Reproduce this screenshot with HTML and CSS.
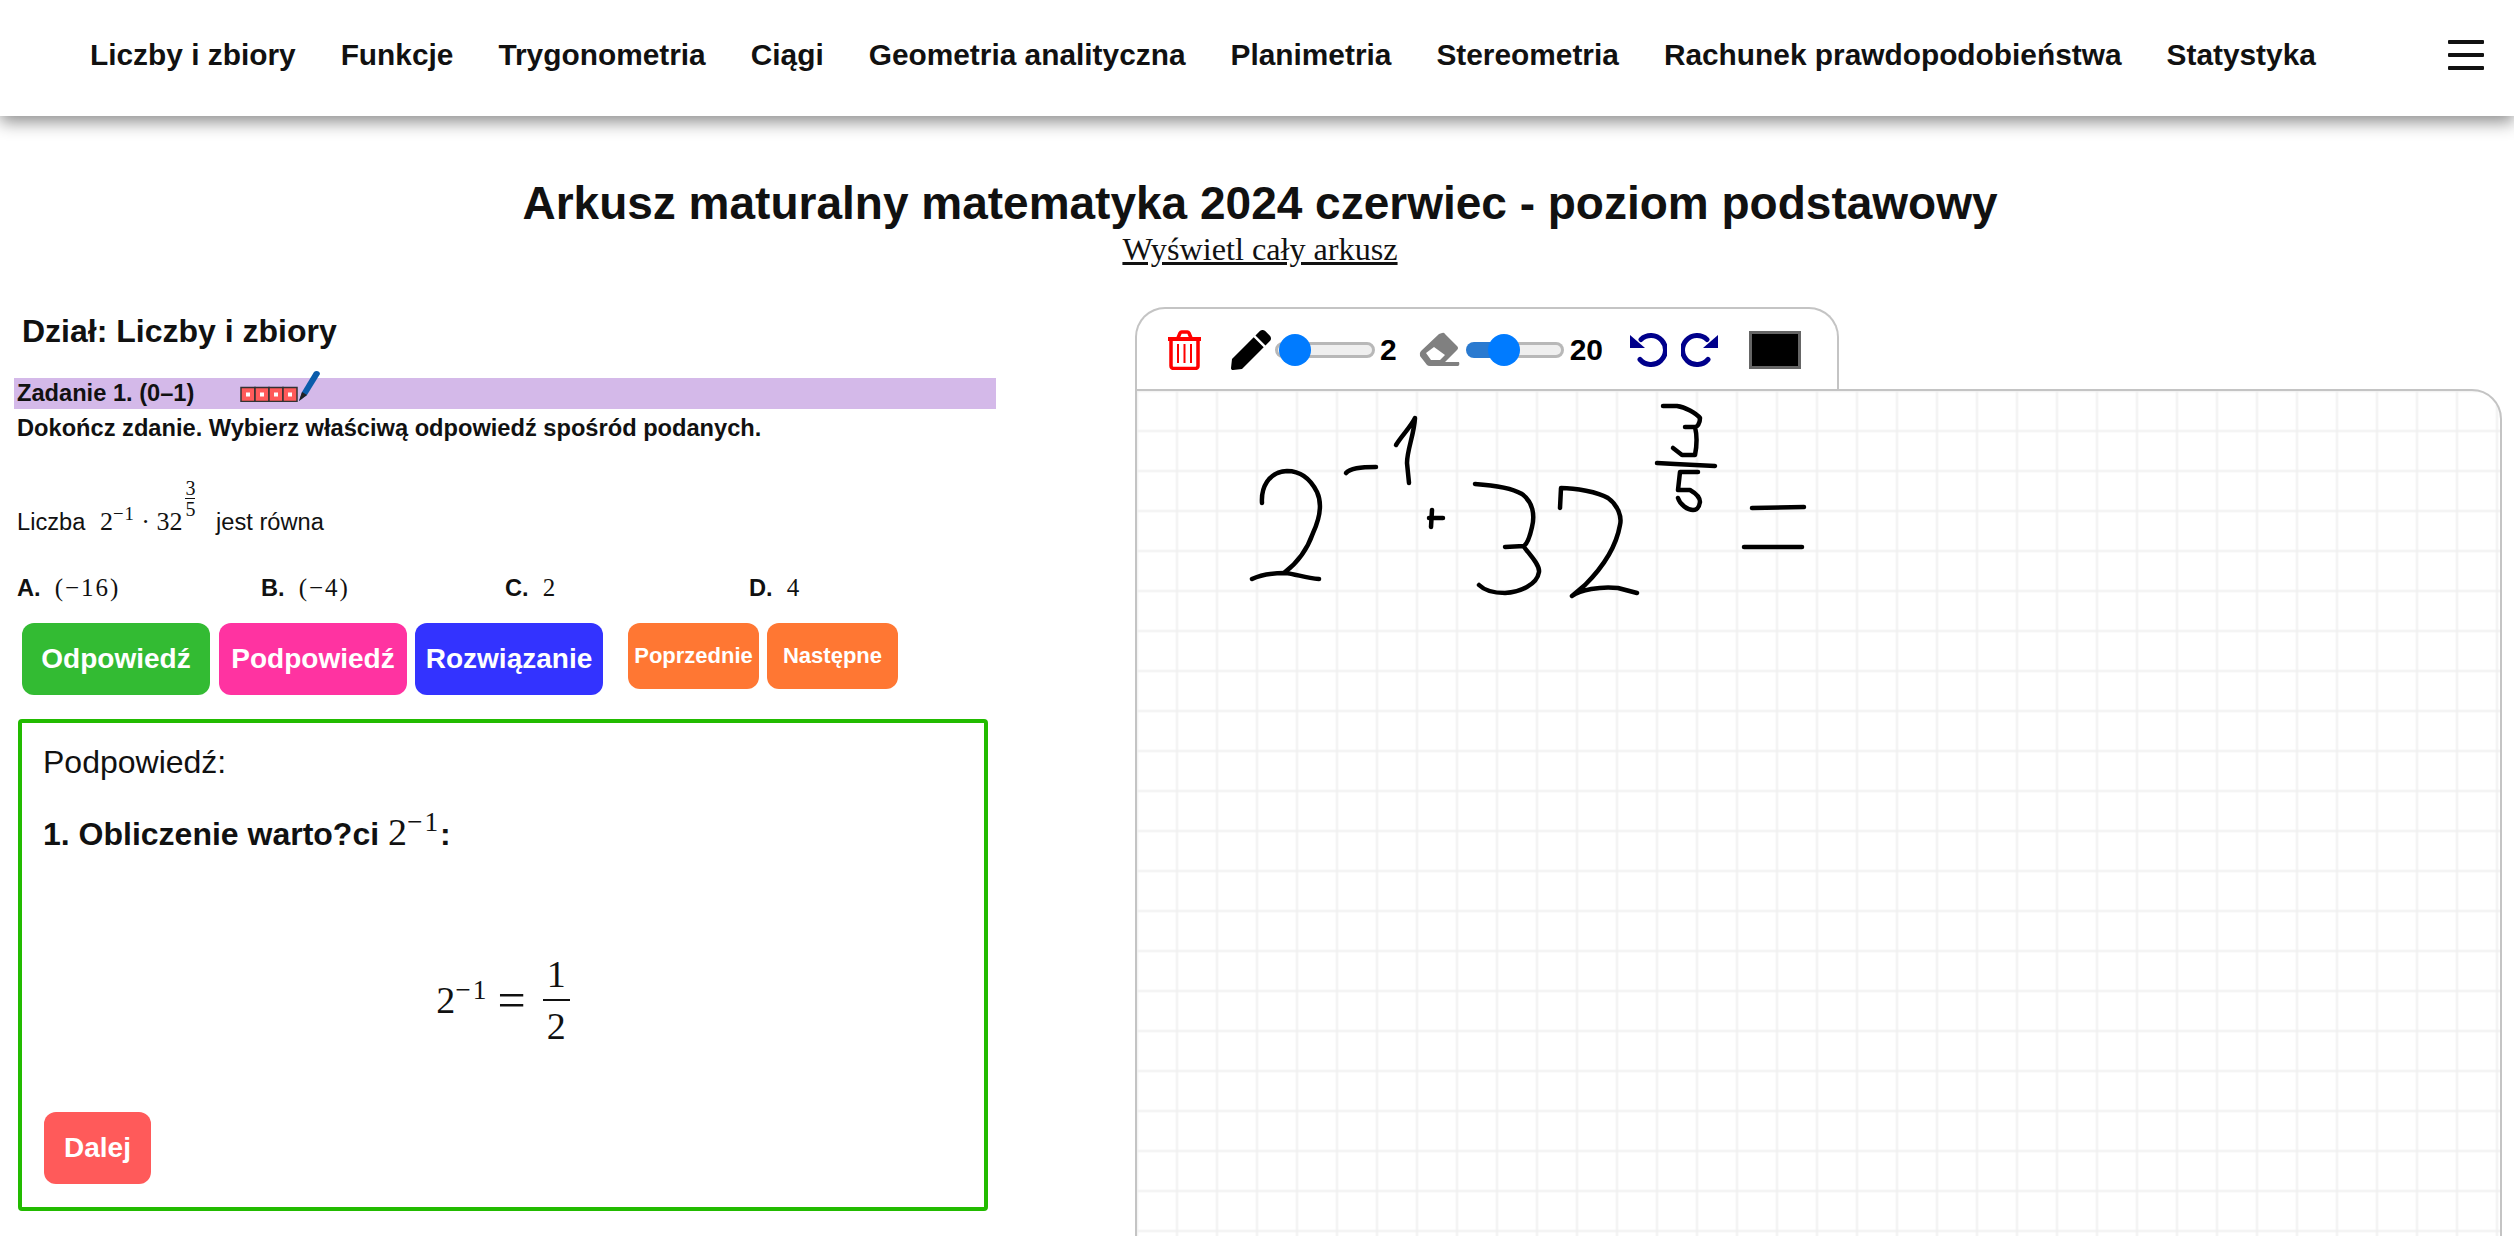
FILE: index.html
```html
<!DOCTYPE html>
<html lang="pl">
  <head>
    <meta charset="utf-8" />
    <meta name="viewport" content="width=device-width, initial-scale=1" />
    <title>Arkusz maturalny matematyka 2024 czerwiec</title>
    <link rel="stylesheet" href="styles.css">
  </head>
  <body>
    <nav class="topnav">
      <a href="#">Liczby i zbiory</a>
      <a href="#">Funkcje</a>
      <a href="#">Trygonometria</a>
      <a href="#">Ciągi</a>
      <a href="#">Geometria analityczna</a>
      <a href="#">Planimetria</a>
      <a href="#">Stereometria</a>
      <a href="#">Rachunek prawdopodobieństwa</a>
      <a href="#">Statystyka</a>
      <button class="burger" type="button" aria-label="Menu"><span></span><span></span><span></span></button>
    </nav>

    <header class="sheet-head">
      <h1>Arkusz maturalny matematyka 2024 czerwiec - poziom podstawowy</h1>
      <a href="#">Wyświetl cały arkusz</a>
    </header>

    <main class="columns">
      <section class="task">
        <h2>Dział: Liczby i zbiory</h2>
        <div class="task-bar">
          <b>Zadanie 1. (0–1)</b>
          <svg class="strip" width="81" height="32" viewBox="0 0 81 32">
            <g stroke="#333" stroke-width="1.5" fill="#ff5a5a">
              <rect x="1" y="17.5" width="14" height="14" />
              <rect x="15" y="17.5" width="14" height="14" />
              <rect x="29" y="17.5" width="14" height="14" />
              <rect x="43" y="17.5" width="14" height="14" />
            </g>
            <g fill="#fff">
              <rect x="6" y="22.5" width="4" height="4" />
              <rect x="20" y="22.5" width="4" height="4" />
              <rect x="34" y="22.5" width="4" height="4" />
              <rect x="48" y="22.5" width="4" height="4" />
            </g>
            <path d="M59 31l3-9L74 2c2-2 6-1 6 2L67 25z" fill="#0b5cab" />
            <path d="M59 31l3-9 5 3z" fill="#222" />
          </svg>
        </div>
        <p class="command">Dokończ zdanie. Wybierz właściwą odpowiedź spośród podanych.</p>
        <p class="question">
          Liczba
          <span class="math inline">2<sup>−1</sup> · 32<span class="sup-frac"><span>3</span><span class="over">5</span></span></span>
          jest równa
        </p>
        <div class="answers">
          <div><b>A.</b><span class="math">(−16)</span></div>
          <div><b>B.</b><span class="math">(−4)</span></div>
          <div><b>C.</b><span class="math">2</span></div>
          <div><b>D.</b><span class="math">4</span></div>
        </div>
        <div class="buttons">
          <button class="btn green" type="button">Odpowiedź</button>
          <button class="btn pink" type="button">Podpowiedź</button>
          <button class="btn blue" type="button">Rozwiązanie</button>
          <button class="btn small" type="button">Poprzednie</button>
          <button class="btn small" type="button">Następne</button>
        </div>
        <div class="hint">
          <div class="hint-title">Podpowiedź:</div>
          <p class="hint-step"><b>1. Obliczenie warto?ci</b> <span class="math">2<sup>−1</sup></span><b>:</b></p>
          <div class="formula">
            <span class="math">2<sup>−1</sup></span>
            <span class="math equals">=</span>
            <span class="math frac"><span>1</span><span class="under">2</span></span>
          </div>
          <button class="btn red" type="button">Dalej</button>
        </div>
      </section>

      <section class="board">
        <div class="toolbar">
          <svg class="tool-trash" width="35" height="40" viewBox="0 0 35 40" fill="none" stroke="#f00" stroke-width="3">
            <path d="M1 9h33" stroke-width="4" />
            <path d="M11 8l2-5a2 2 0 0 1 2-1h5a2 2 0 0 1 2 1l2 5" stroke-width="3.5" />
            <path d="M4 10v26a2.500 2.500 0 0 0 2.500 2.500h22a2.500 2.500 0 0 0 2.500-2.500V10" stroke-width="3.500" />
            <path d="M11 14v19M17.500 14v19M24 14v19" stroke-width="2" />
          </svg>
          <svg class="tool-pen" width="40" height="40" viewBox="0 0 512 512">
            <path d="M290.740 93.240l128.020 128.020-277.990 277.990-114.140 12.600C11.350 513.540-1.560 500.620.140 485.340l12.700-114.220 277.900-277.880zm207.200-19.060l-60.110-60.110c-18.750-18.750-49.160-18.750-67.910 0l-56.550 56.550 128.020 128.020 56.550-56.550c18.750-18.760 18.750-49.160 0-67.910z" />
          </svg>
          <input class="slider" type="range" min="1" max="60" value="2" aria-label="Grubość pisaka" />
          <span class="size">2</span>
          <svg class="tool-eraser" width="41" height="36" viewBox="0 0 41 36">
            <path fill-rule="evenodd" fill="#808080" d="M23 1Q25 0 26 2L38 14Q40 16 38 18L26 30H40Q41 33 39 34H11Q9 34 8 33L1 24Q0 21 2 19L20 2ZM7 21L15 15 26 23 21 28H12Z" />
          </svg>
          <input class="slider slider-fill" type="range" min="1" max="60" value="20" aria-label="Grubość gumki" />
          <span class="size size-wide">20</span>
          <svg class="tool-undo" width="37" height="36" viewBox="0 0 37 36">
            <path d="M11 7.500A14.500 14.500 0 1 1 10 27.500" fill="none" stroke="#00008b" stroke-width="5" stroke-linecap="round" />
            <path d="M0 3v13h15z" fill="#00008b" />
          </svg>
          <svg class="tool-redo" width="37" height="36" viewBox="0 0 37 36">
            <path d="M26 7.500A14.500 14.500 0 1 0 27 27.500" fill="none" stroke="#00008b" stroke-width="5" stroke-linecap="round" />
            <path d="M37 3v13H22z" fill="#00008b" />
          </svg>
          <span class="swatch"></span>
        </div>
        <div class="canvas">
          <svg class="ink" width="1365" height="845" viewBox="1137 391 1365 845" fill="none" stroke="#000" stroke-width="4.5" stroke-linecap="round" stroke-linejoin="round">
            <path d="M1262 503C1261 488 1268 472 1287 471C1303 471 1312 482 1317 492C1323 505 1319 520 1313 533C1307 550 1297 563 1285 572" />
            <path d="M1252 579C1262 574 1275 573 1285 573C1296 574 1305 578 1319 579" />
            <path d="M1346 473C1350 468 1360 467 1376 467" />
            <path d="M1396 445C1402 435 1410 428 1415 418C1414 435 1407 450 1407 463L1409 483" />
            <path d="M1432 510L1431 527M1429 518L1443 518" />
            <path d="M1475 484C1490 485 1510 487 1522 494C1533 502 1535 515 1532 527C1530 536 1528 543 1524 546L1505 547M1524 547C1530 555 1540 565 1539 572C1537 585 1520 592 1505 593C1493 593 1485 591 1479 585" />
            <path d="M1560 508L1561 488C1575 488 1598 492 1608 498C1618 505 1622 517 1620 525C1616 548 1600 570 1585 585L1572 596C1580 590 1600 586 1618 588L1637 593" />
            <path d="M1663 406L1677 406C1685 407 1696 413 1700 418C1700 424 1697 427 1695 427L1685 427M1695 427C1697 435 1697 445 1695 455L1682 455L1673 448" />
            <path d="M1657 463L1675 464 1715 466" />
            <path d="M1698 472L1680 472 1678 490 1690 490C1697 494 1700 498 1700 502C1699 508 1697 510 1693 510C1688 510 1680 505 1678 498" />
            <path d="M1752 508L1804 507" />
            <path d="M1744 547L1802 547" />
          </svg>
        </div>
      </section>
    </main>
  </body>
</html>
```

FILE: styles.css
```css
* {
  box-sizing: border-box;
}

html,
body {
  height: 100%;
}

body {
  margin: 0;
  overflow: hidden;
  font-family: "Liberation Sans", Arial, sans-serif;
  color: #111;
  background-color: white;
}

/* Top menu */
.topnav {
  display: flex;
  align-items: center;
  gap: 45px;
  height: 116px;
  padding: 0 30px 6px 90px;
  background-color: white;
  box-shadow: 0 6px 16px rgba(0, 0, 0, 0.45);
}

.topnav a {
  font-size: 29.85px;
  font-weight: bold;
  color: #111;
  text-decoration: none;
}

.burger {
  display: flex;
  flex-direction: column;
  gap: 9px;
  width: 36px;
  margin-left: auto;
  padding: 0;
  border: none;
  background: none;
}

.burger span {
  height: 4px;
  border-radius: 1px;
  background-color: #111;
}

/* Sheet title */
.sheet-head {
  padding: 60px 0 0 6px;
  text-align: center;
}

.sheet-head h1 {
  margin: 0;
  font-size: 46px;
  line-height: 55px;
}

.sheet-head a {
  display: block;
  font-family: "Liberation Serif", serif;
  font-size: 32.2px;
  line-height: 36px;
  color: #111;
}

.columns {
  display: flex;
  align-items: flex-start;
}

/* Left column */
.task {
  flex: none;
  width: 982px;
  margin-left: 14px;
  padding-top: 46px;
}

.task h2 {
  margin: 0 0 0 8px;
  font-size: 32px;
  line-height: 37px;
}

.task-bar {
  display: flex;
  height: 31px;
  margin-top: 28px;
  padding-left: 3px;
  background-color: #d4b9e9;
  font-size: 23.65px;
  line-height: 30px;
}

.strip {
  flex: none;
  margin: -8px 0 0 46px;
}

.command {
  margin: 0;
  padding-left: 3px;
  font-size: 23.65px;
  font-weight: bold;
  line-height: 38px;
}

.question {
  height: 60px;
  margin: 31px 0 0;
  padding-left: 3px;
  font-size: 23.65px;
  line-height: 60px;
}

.math {
  font-family: "Liberation Serif", serif;
  font-size: 25px;
}

.inline {
  margin: 0 14px 0 8px;
  font-size: 26px;
}

.math sup {
  font-size: 0.72em;
  line-height: 0;
  letter-spacing: 1px;
}

.sup-frac {
  display: inline-flex;
  flex-direction: column;
  align-items: center;
  margin-left: 3px;
  vertical-align: 35px;
  font-size: 20px;
  line-height: 20px;
}

.sup-frac .over {
  border-top: 1px solid #111;
}

.answers {
  display: grid;
  grid-template-columns: repeat(4, 244px);
  margin-top: 35px;
  padding-left: 3px;
  font-size: 23.65px;
  line-height: 30px;
}

.answers .math {
  margin-left: 14px;
  letter-spacing: 2px;
}

.buttons {
  display: flex;
  align-items: flex-start;
  gap: 9px;
  margin-top: 20px;
  padding-left: 8px;
}

.btn {
  height: 72px;
  padding: 0;
  border: none;
  border-radius: 12px;
  font-family: "Liberation Sans", Arial, sans-serif;
  font-size: 28px;
  font-weight: bold;
  color: white;
}

.green,
.pink,
.blue {
  width: 188px;
}

.green {
  background-color: #33bb33;
}

.pink {
  background-color: #ff33a1;
}

.blue {
  margin-left: -1px;
  background-color: #3333ff;
}

.small {
  width: 131px;
  height: 66px;
  font-size: 22px;
  background-color: #ff7733;
}

.small:nth-child(4) {
  margin: 0 -1px 0 16px;
}

.red {
  display: block;
  width: 107px;
  margin-left: 1px;
  background-color: #ff5a5a;
}

/* Hint box */
.hint {
  width: 970px;
  height: 492px;
  margin: 24px 0 0 4px;
  padding: 21px 21px;
  border: 4px solid #22bb00;
  border-radius: 4px;
}

.hint-title {
  font-size: 32px;
  line-height: 37px;
}

.hint-step {
  margin: 31px 0 0;
  font-size: 32px;
  line-height: 40px;
}

.hint-step .math {
  font-size: 38px;
}

.hint-step sup {
  letter-spacing: 2px;
}

.formula {
  display: flex;
  align-items: center;
  justify-content: center;
  height: 120px;
  margin-top: 86px;
}

.formula .math {
  font-size: 38px;
}

.formula .equals {
  margin: 0 17px 0 9px;
  font-size: 50px;
  line-height: 1;
}

.formula sup {
  letter-spacing: 2px;
}

.frac {
  display: inline-flex;
  flex-direction: column;
  align-items: center;
  width: 27px;
  line-height: 50px;
}

.frac .under {
  width: 100%;
  border-top: 2px solid #111;
  text-align: center;
}

.formula + .red {
  margin-top: 52px;
}

/* Drawing board */
.board {
  flex: 1;
  min-width: 0;
  margin: 40px 12px 0 139px;
}

.toolbar {
  display: flex;
  align-items: center;
  width: 704px;
  height: 84px;
  padding: 0 0 0 30px;
  border: 2px solid #c4c4c4;
  border-bottom: none;
  border-radius: 30px 30px 0 0;
}

.tool-pen {
  margin-left: 29px;
}

.slider {
  width: 100px;
  height: 16px;
  margin: 0 0 0 4px;
  border: 3px solid #b8b8b8;
  border-radius: 8px;
  background-color: #efefef;
  -webkit-appearance: none;
  appearance: none;
}

.slider::-webkit-slider-thumb {
  width: 32px;
  height: 32px;
  border: none;
  border-radius: 50%;
  background-color: #007bff;
  -webkit-appearance: none;
}

.slider-fill {
  width: 98px;
  margin-left: 6px;
  border-color: transparent;
  background: linear-gradient(to right, #2a7ad0 40%, transparent 40%) border-box,
    linear-gradient(#efefef, #efefef) padding-box,
    linear-gradient(#b8b8b8, #b8b8b8) border-box;
}

.size {
  margin-left: 5px;
  font-size: 30px;
  font-weight: bold;
  color: #000;
}

.size-wide {
  margin-left: 6px;
}

.tool-eraser {
  margin-left: 22px;
}

.tool-undo {
  margin-left: 27px;
}

.tool-redo {
  margin-left: 14px;
}

.swatch {
  width: 52px;
  height: 38px;
  margin-left: 31px;
  border: 3px solid #666;
  background-color: black;
}

.canvas {
  height: 900px;
  margin-top: -2px;
  border: 2px solid #c4c4c4;
  border-radius: 0 30px 0 0;
  background-color: white;
  background-image: linear-gradient(transparent, #f0f0f0 2px, transparent 4px),
    linear-gradient(90deg, transparent, #f0f0f0 2px, transparent 4px);
  background-size: 40px 40px;
  background-position: -2px -2px;
}

.ink {
  display: block;
}
```
